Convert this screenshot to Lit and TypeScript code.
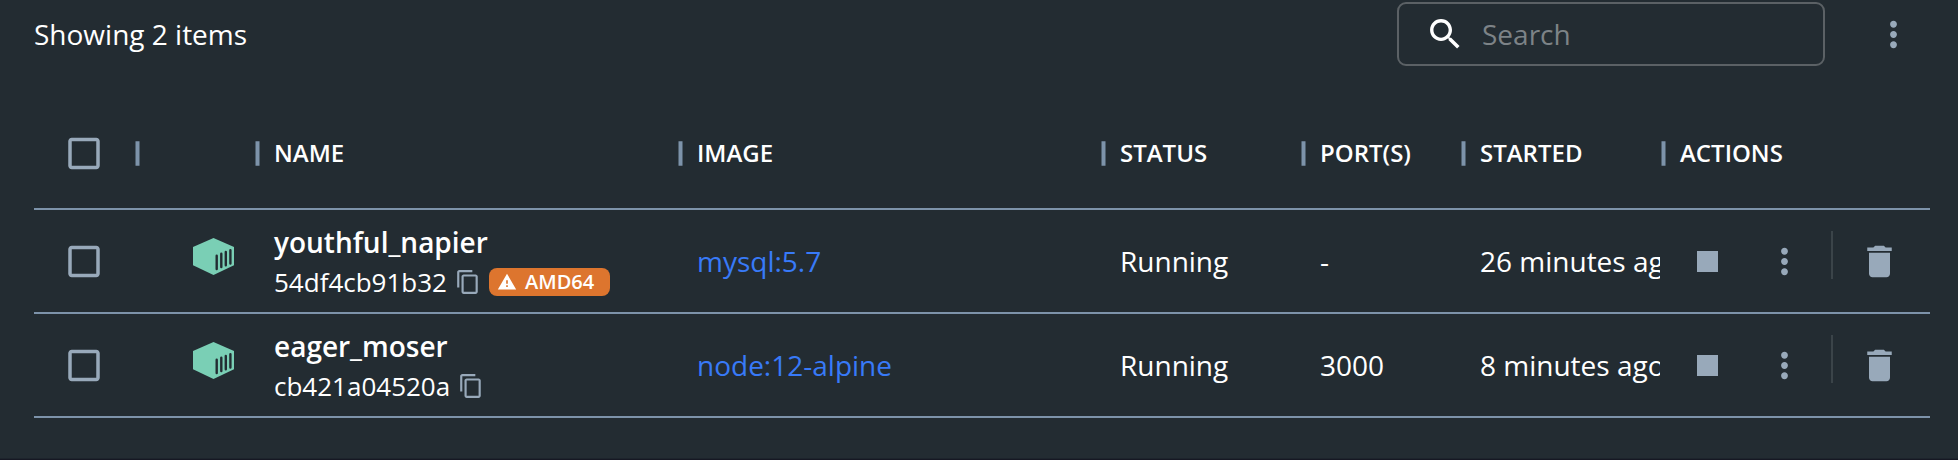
import { LitElement, html, css, svg, nothing } from "lit";
import { customElement } from "lit/decorators.js";

interface Container {
  name: string;
  id: string;
  image: string;
  status: string;
  ports: string;
  started: string;
  arch?: string;
}

const containers: Container[] = [
  { name: "youthful_napier", id: "54df4cb91b32", image: "mysql:5.7", status: "Running", ports: "-", started: "26 minutes ago", arch: "AMD64" },
  { name: "eager_moser", id: "cb421a04520a", image: "node:12-alpine", status: "Running", ports: "3000", started: "8 minutes ago" },
];

const columns = ["", "NAME", "IMAGE", "STATUS", "PORT(S)", "STARTED", "ACTIONS"];

const paths = {
  search: "M15.5 14h-.79l-.28-.27C15.41 12.59 16 11.11 16 9.5 16 5.91 13.09 3 9.5 3S3 5.91 3 9.5 5.91 16 9.5 16c1.61 0 3.09-.59 4.23-1.57l.27.28v.79l5 4.99L20.49 19l-4.99-5zm-6 0C7.01 14 5 11.99 5 9.5S7.01 5 9.5 5 14 7.01 14 9.5 11.99 14 9.5 14z",
  more: "M12 8c1.1 0 2-.9 2-2s-.9-2-2-2-2 .9-2 2 .9 2 2 2zm0 2c-1.1 0-2 .9-2 2s.9 2 2 2 2-.9 2-2-.9-2-2-2zm0 6c-1.1 0-2 .9-2 2s.9 2 2 2 2-.9 2-2-.9-2-2-2z",
  checkbox: "M19 5v14H5V5h14m0-2H5c-1.1 0-2 .9-2 2v14c0 1.1.9 2 2 2h14c1.1 0 2-.9 2-2V5c0-1.1-.9-2-2-2z",
  copy: "M16 1H4c-1.1 0-2 .9-2 2v14h2V3h12V1zm3 4H8c-1.1 0-2 .9-2 2v14c0 1.1.9 2 2 2h11c1.1 0 2-.9 2-2V7c0-1.1-.9-2-2-2zm0 16H8V7h11v14z",
  warning: "M1 21h22L12 2 1 21zm12-3h-2v-2h2v2zm0-4h-2v-4h2v4z",
  stop: "M6 6h12v12H6z",
  trash: "M6 19c0 1.1.9 2 2 2h8c1.1 0 2-.9 2-2V7H6v12zM19 4h-3.5l-1-1h-5l-1 1H5v2h14V4z",
};

const icon = (name: keyof typeof paths, cls = "", viewBox = "0 0 24 24") =>
  html`<svg class="icon ${cls}" viewBox=${viewBox}>${svg`<path d=${paths[name]} />`}</svg>`;

const checkbox = icon("checkbox", "box", "0 -0.286 24 24.572");
const buttonBox = "-0.286 -0.286 24.572 24.572";

const cube = html`<svg class="cube" viewBox="0 0 41 37">
  <path class="cube-face" d="M20.5 0 41 9v18.3L20.5 37 0 27.3V9z" />
  <path class="cube-bar" d="M23.7 17.7v13.4M28.3 15.7v13.4M32.8 13.9v13.4M37.4 12.2v13.4" />
</svg>`;

@customElement("app-root")
export class AppRoot extends LitElement {
  static styles = css`
    :host {
      display: block;
      box-sizing: border-box;
      height: 460px;
      padding: 2px 28px 0 34px;
      overflow: hidden;
      background: #232c32;
      border-bottom: 1px solid #161823;
      box-shadow: inset 0 -1px #1d242c;
      color: #fff;
      font: 400 28px/40px "Open Sans", "Noto Sans", sans-serif;
    }
    .icon {
      display: block;
      flex: none;
      width: 42px;
      height: 42px;
      fill: #98a9ba;
    }
    .icon.box {
      height: 43px;
    }
    .icon.button {
      width: 43px;
      height: 43px;
    }
    .toolbar {
      display: flex;
      align-items: center;
      height: 64px;
    }
    .count {
      flex: 1;
    }
    .search {
      display: flex;
      align-items: center;
      box-sizing: border-box;
      width: 428px;
      height: 64px;
      padding: 0 26px;
      gap: 16.5px;
      border: 2px solid #5b6165;
      border-radius: 9px;
      color: #7d8387;
    }
    .icon.glass {
      width: 40.5px;
      height: 40.5px;
      fill: #fff;
    }
    .icon.dots {
      width: 41px;
      height: 41px;
    }
    .menu {
      margin: 1px 16px 0 48px;
    }
    .row {
      display: grid;
      grid-template-columns: 100px 120px 423px 423px 200px 160px 200px 270px;
      box-sizing: border-box;
      height: 104px;
      border-bottom: 2px solid #7d93aa;
    }
    .head {
      height: 112px;
      margin-top: 32px;
      font-size: 24px;
      font-weight: 600;
    }
    .cell {
      display: flex;
      align-items: center;
      min-width: 0;
      box-sizing: border-box;
      padding-left: 20px;
      overflow: hidden;
      white-space: nowrap;
    }
    .check {
      justify-content: center;
      padding: 1px 0 0;
    }
    .title {
      padding-left: 1px;
      gap: 14px;
    }
    .separator {
      flex: none;
      width: 5px;
      height: 25px;
      margin-top: 1px;
      fill: #7d93aa;
    }
    .kind {
      justify-content: center;
      padding: 0 0 9px 39px;
    }
    .cube {
      width: 41px;
      height: 37px;
    }
    .cube-face {
      fill: #7acfb5;
    }
    .cube-bar {
      fill: none;
      stroke: #232c32;
      stroke-width: 2.4;
      stroke-linecap: round;
    }
    .identity {
      flex-direction: column;
      align-items: flex-start;
      justify-content: center;
    }
    .name {
      height: 40px;
      font-weight: 600;
      line-height: 42px;
    }
    .meta {
      display: flex;
      align-items: center;
      box-sizing: border-box;
      height: 40px;
      padding-top: 2px;
      font-size: 26px;
    }
    .icon.copy {
      width: 26px;
      height: 26px;
      margin-left: 8px;
    }
    .badge {
      display: flex;
      align-items: center;
      box-sizing: border-box;
      height: 28px;
      margin-left: 8px;
      padding: 0 16px 0 8px;
      gap: 8px;
      border-radius: 8px;
      background: #dd752e;
      font-size: 20px;
      font-weight: 600;
      line-height: 28px;
    }
    .icon.warn {
      width: 20px;
      height: 20px;
      fill: #fff;
    }
    .link {
      color: #387af8;
    }
    .clipped {
      overflow: hidden;
    }
    .actions {
      padding: 1px 0 0 26px;
    }
    .actions .dots {
      margin-left: 35px;
    }
    .divider {
      width: 2px;
      height: 48px;
      margin: -13px 25px 0 26px;
      background: #3b4449;
    }
  `;

  private header() {
    return html`<div class="row head">
      <div class="cell check">${checkbox}</div>
      ${columns.map(
        (label) => html`<div class="cell title">
          <svg class="separator" viewBox="0 0 5 25"><rect x="0.5" y="0.25" width="4" height="24.5" /></svg>
          <span>${label}</span>
        </div>`
      )}
    </div>`;
  }

  private row(c: Container) {
    return html`<div class="row">
      <div class="cell check">${checkbox}</div>
      <div class="cell kind">${cube}</div>
      <div class="cell identity">
        <div class="name">${c.name}</div>
        <div class="meta">
          <span>${c.id}</span>${icon("copy", "copy")}
          ${c.arch ? html`<div class="badge">${icon("warning", "warn")}<span>${c.arch}</span></div>` : nothing}
        </div>
      </div>
      <div class="cell link">${c.image}</div>
      <div class="cell">${c.status}</div>
      <div class="cell">${c.ports}</div>
      <div class="cell"><span class="clipped">${c.started}</span></div>
      <div class="cell actions">
        ${icon("stop", "button", buttonBox)}${icon("more", "dots")}
        <div class="divider"></div>
        ${icon("trash", "button", buttonBox)}
      </div>
    </div>`;
  }

  render() {
    return html`
      <div class="toolbar">
        <div class="count">Showing 2 items</div>
        <div class="search">${icon("search", "glass")}<span>Search</span></div>
        <div class="menu">${icon("more", "dots")}</div>
      </div>
      ${this.header()}${containers.map((c) => this.row(c))}
    `;
  }
}
